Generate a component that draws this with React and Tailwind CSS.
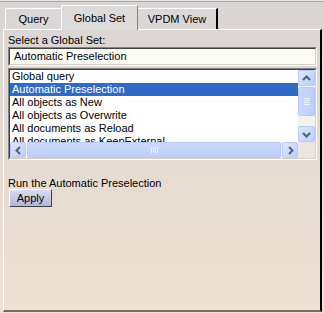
import React from 'react';

const items = [
  'Global query',
  'Automatic Preselection',
  'All objects as New',
  'All objects as Overwrite',
  'All documents as Reload',
  'All documents as KeepExternal',
];

function Arrow({ dir }) {
  const paths = {
    up: 'M1 6 L4.5 2.5 L8 6',
    down: 'M1 3 L4.5 6.5 L8 3',
    left: 'M6 1 L2.5 4.5 L6 8',
    right: 'M3 1 L6.5 4.5 L3 8',
  };
  return (
    <svg width="9" height="9" viewBox="0 0 9 9">
      <path d={paths[dir]} fill="none" stroke="#4d6185" strokeWidth="2" />
    </svg>
  );
}

function ScrollBtn({ dir, className = '' }) {
  return (
    <div
      className={`flex items-center justify-center rounded-[2px] border border-[#b7c9f5] bg-gradient-to-br from-[#dfe7fd] to-[#bccdfa] ${className}`}
    >
      <Arrow dir={dir} />
    </div>
  );
}

export default function App() {
  return (
    <div className="w-[324px] h-[313px] overflow-hidden bg-gradient-to-b from-[#d9d4d4] to-[#efe1d0] font-['Liberation_Sans',sans-serif] text-[11px] leading-none text-black">
      {/* linea superior */}
      <div className="h-[1px] bg-[#e6e3e3]" />
      <div className="h-[1px] bg-[#a9a6a6]" />

      {/* Pestañas */}
      <div className="flex items-end h-[27px] pl-[5px]">
        <div className="w-[56px] h-[21px] flex items-center justify-center border-l border-t border-white rounded-tl-[2px] bg-[#dcd7d7]">
          Query
        </div>
        <div className="w-[77px] h-[25px] flex items-center justify-center border-l border-t border-white rounded-t-[2px] border-r border-r-[#848284] bg-[#dddada] mb-[-1px] relative z-10">
          Global Set
        </div>
        <div className="w-[80px] h-[21px] flex items-center justify-center border-t border-white border-r-2 border-r-black bg-[#dcd7d7]">
          VPDM View
        </div>
      </div>

      {/* Panel */}
      <div className="ml-[3px] w-[319px] h-[283px] border-l border-t border-white border-r-2 border-r-black border-b-2 border-b-[#6f6c6a] px-[4px] pt-[5px]">
        <div className="h-[11px]">Select a Global Set:</div>

        <div className="mt-[1px] h-[19px] w-[309px] border border-t-[#848284] border-l-[#848284] border-r-white border-b-white">
          <div className="h-full border border-t-[#404040] border-l-[#404040] border-r-[#d4d0c8] border-b-[#d4d0c8] bg-[#fbfbf4] flex items-center pl-[4px]">
            Automatic Preselection
          </div>
        </div>

        {/* Lista */}
        <div className="mt-[2px] w-[309px] h-[92px] border border-t-[#848284] border-l-[#848284] border-r-white border-b-white">
          <div className="h-full border border-t-[#404040] border-l-[#404040] border-r-[#d4d0c8] border-b-[#d4d0c8] bg-white flex flex-col">
            <div className="flex flex-1 min-h-0">
              <div className="flex-1 overflow-hidden">
                {items.map((t, i) => (
                  <div
                    key={t}
                    className={`h-[13px] flex items-center pl-[2px] whitespace-nowrap ${
                      i === 1 ? 'bg-[#316ac5] text-white' : ''
                    }`}
                  >
                    {t}
                  </div>
                ))}
              </div>
              <div className="w-[17px] flex flex-col bg-[#f4f2ed]">
                <ScrollBtn dir="up" className="h-[16px]" />
                <div className="mt-[1px] h-[29px] rounded-[2px] border border-[#b7c9f5] bg-gradient-to-r from-[#cbd9fd] to-[#bccdfa] flex flex-col items-center justify-center gap-[1px]">
                  <div className="w-[6px] h-[1px] bg-[#eef3fe]" />
                  <div className="w-[6px] h-[1px] bg-[#eef3fe]" />
                  <div className="w-[6px] h-[1px] bg-[#eef3fe]" />
                  <div className="w-[6px] h-[1px] bg-[#eef3fe]" />
                </div>
                <div className="flex-1" />
                <ScrollBtn dir="down" className="h-[16px]" />
              </div>
            </div>
            <div className="h-[16px] flex bg-[#f4f2ed]">
              <ScrollBtn dir="left" className="w-[16px]" />
              <div className="ml-[1px] flex-1 rounded-[2px] border border-[#b7c9f5] bg-gradient-to-b from-[#cbd9fd] to-[#bccdfa] flex items-center justify-center gap-[1px]">
                <div className="w-[1px] h-[6px] bg-[#eef3fe]" />
                <div className="w-[1px] h-[6px] bg-[#eef3fe]" />
                <div className="w-[1px] h-[6px] bg-[#eef3fe]" />
                <div className="w-[1px] h-[6px] bg-[#eef3fe]" />
              </div>
              <ScrollBtn dir="right" className="ml-[1px] w-[16px]" />
              <div className="w-[17px] bg-[#ebe6e0]" />
            </div>
          </div>
        </div>

        <div className="mt-[18px] h-[11px]">Run the Automatic Preselection</div>

        <button className="mt-[0px] ml-[1px] w-[43px] h-[18px] flex items-center justify-center border border-t-white border-l-white border-r-[#404040] border-b-[#404040] bg-gradient-to-b from-[#dcdcf2] to-[#b4b4d8]">
          Apply
        </button>
      </div>
    </div>
  );
}
